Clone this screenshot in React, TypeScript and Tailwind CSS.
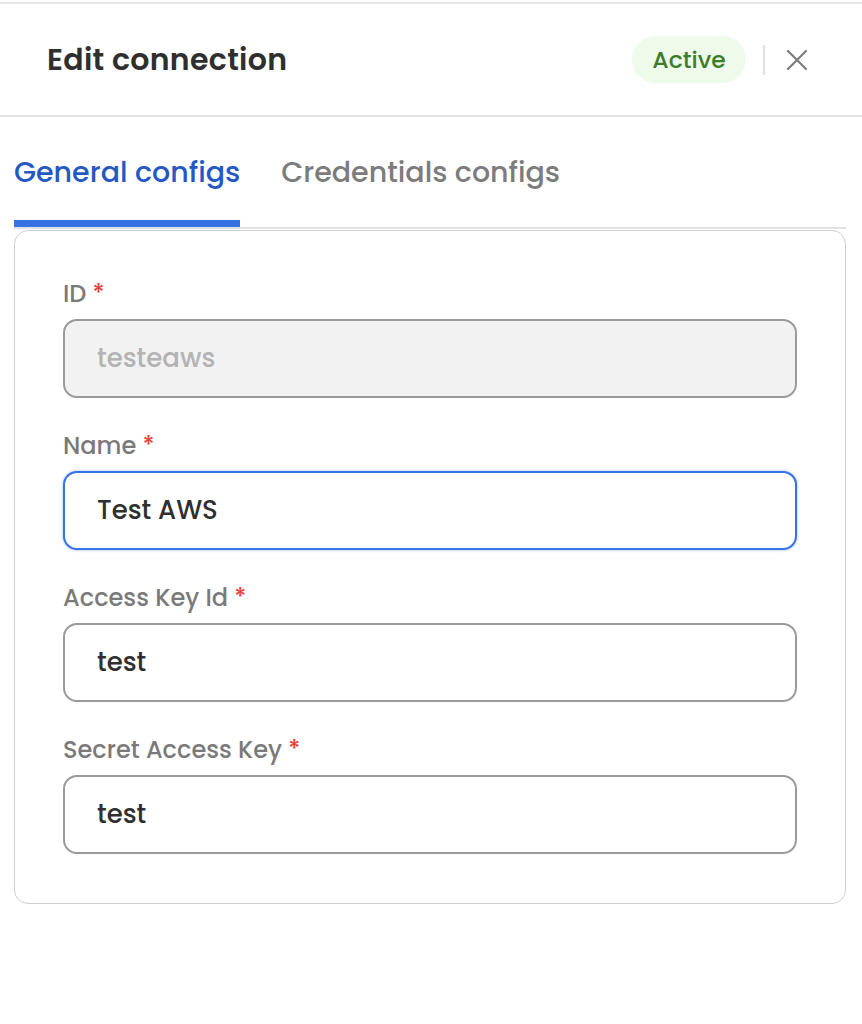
const fields = [
  { label: "ID", value: "testeaws", disabled: true },
  { label: "Name", value: "Test AWS", focused: true },
  { label: "Access Key Id", value: "test" },
  { label: "Secret Access Key", value: "test" },
];

export default function App() {
  return (
    <div className="w-[862px] h-[1024px] bg-white font-['Poppins','Inter',sans-serif] text-[#333]">
      {/* Header */}
      <div className="mt-[2px] border-t-2 border-[#e5e5e5]">
        <div className="h-[113px] flex items-center justify-between pl-[47px] pr-[54px] border-b-2 border-[#e2e2e2]">
          <h1 className="text-[30px] font-semibold text-[#2f2f2f] tracking-[0.3px]">Edit connection</h1>
          <div className="flex items-center">
            <span className="h-[47px] w-[114px] rounded-full bg-[#eefaea] text-[#3e7d2b] text-[23.5px] font-medium flex items-center justify-center">
              Active
            </span>
            <span className="ml-[17px] w-[2px] h-[30px] bg-[#e0e0e0]" />
            <button className="ml-[21px] text-[#7c7c7c]" aria-label="Close">
              <svg width="22" height="22" viewBox="0 0 22 22" fill="none" stroke="currentColor" strokeWidth="2.2" strokeLinecap="round">
                <path d="M2 2L20 20M20 2L2 20" />
              </svg>
            </button>
          </div>
        </div>
      </div>

      {/* Tabs */}
      <div className="mx-[14px] w-[832px] flex gap-[41px] border-b-2 border-[#e2e2e2] pt-[37px]">
        <div className="flex flex-col">
          <span className="text-[28.5px] font-medium text-[#2558c4] leading-[36px]">General configs</span>
          <span className="mt-[30px] h-[7px] bg-[#3572e5]" />
        </div>
        <div className="flex flex-col">
          <span className="text-[28.5px] font-medium text-[#7c7c7c] leading-[36px]">Credentials configs</span>
        </div>
      </div>

      {/* Card */}
      <div className="mx-[14px] mt-[1px] w-[832px] rounded-[14px] border border-[#cfcfcf] px-[48px] pt-[48px] pb-[49px] flex flex-col gap-[33px]">
        {fields.map((f) => (
          <div key={f.label} className="flex flex-col">
            <label className="text-[24px] font-medium text-[#7a7a7a] leading-[30px] h-[30px]">
              {f.label} <span className="text-[#e5423a]">*</span>
            </label>
            <div
              className={`mt-[10px] h-[79px] rounded-[14px] border-2 flex items-center px-[32px] text-[26px] font-medium ${
                f.disabled
                  ? "bg-[#f2f2f2] border-[#9a9a9a] text-[#b3b3b3]"
                  : f.focused
                  ? "bg-white border-[#3572e5] text-[#2f2f2f] shadow-[0_0_3px_rgba(53,114,229,0.5)]"
                  : "bg-white border-[#9a9a9a] text-[#2f2f2f]"
              }`}
            >
              {f.value}
            </div>
          </div>
        ))}
      </div>
    </div>
  );
}
